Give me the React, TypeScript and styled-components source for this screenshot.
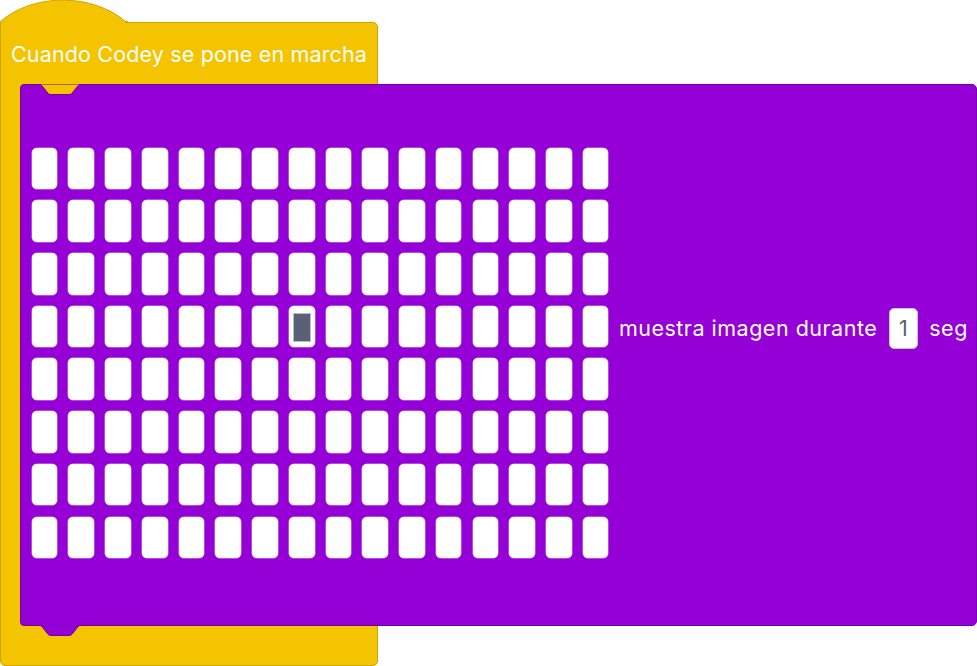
import React from "react";
import styled, { createGlobalStyle } from "styled-components";

const YELLOW = "#f5c400";
const YELLOW_EDGE = "#cfa500";
const PURPLE = "#9400d6";
const PURPLE_EDGE = "#7400a8";
const FONT = `"Inter", "Noto Sans", "Liberation Sans", sans-serif`;

const Global = createGlobalStyle`
  html, body { margin: 0; padding: 0; background: #ffffff; }
  body { font-family: ${FONT}; overflow: hidden; }
`;

const Workspace = styled.div`
  width: 977px;
  height: 666px;
  overflow: hidden;
  background: #ffffff;
`;

const Script = styled.div`
  display: flex;
  flex-direction: column;
  width: 378px;
`;

const Cap = styled.svg`
  display: block;
  position: relative;
  z-index: 2;
  margin-bottom: -2px;
`;

const CBlock = styled.div`
  box-sizing: border-box;
  width: 378px;
  background: ${YELLOW};
  border: 1px solid ${YELLOW_EDGE};
  border-radius: 0 5px 5px 5px;
  display: flex;
  flex-direction: column;
`;

const HatLabel = styled.div`
  height: 61px;
  display: flex;
  align-items: center;
  padding-left: 10px;
  color: #ffffff;
  font-size: 21.5px;
  letter-spacing: 0.15px;
  white-space: nowrap;
`;

const Mouth = styled.div`
  display: flex;
  padding-left: 19px;
`;

const StackBlock = styled.div`
  position: relative;
  box-sizing: border-box;
  flex: none;
  width: 957px;
  height: 542px;
  background: ${PURPLE};
  border: 1px solid ${PURPLE_EDGE};
  border-radius: 4px 5px 5px 4px;
  padding: 62.7px 0 0 10.7px;
  display: flex;
  align-items: flex-start;
`;

const Notch = styled.svg<{ $edge: "top" | "bottom" }>`
  position: absolute;
  left: 17px;
  ${(p) => (p.$edge === "top" ? "top: -1px;" : "bottom: -12px;")}
`;

const Matrix = styled.div`
  display: grid;
  grid-template-columns: repeat(16, 25.7px);
  grid-auto-rows: 41.6px;
  column-gap: 11.05px;
  row-gap: 11.1px;
`;

const Led = styled.div`
  box-sizing: border-box;
  background: #ffffff;
  border-radius: 5px;
  box-shadow: 0 0 0 0.5px rgba(225, 190, 245, 0.8);
  display: flex;
  align-items: center;
  justify-content: center;
  padding-top: 2px;
`;

const Cursor = styled.div`
  box-sizing: border-box;
  width: 18px;
  height: 29px;
  background: #5b6079;
  border: 1px solid #b8bbc9;
`;

const Fields = styled.div`
  display: flex;
  align-items: center;
  gap: 11.5px;
  margin-top: 160.3px;
  margin-left: 10.5px;
  color: #ffffff;
  font-size: 21.5px;
  letter-spacing: 0.5px;
  white-space: nowrap;
`;

const NumberInput = styled.div`
  box-sizing: border-box;
  width: 29px;
  height: 41px;
  background: #ffffff;
  border: 1px solid #c9c3d6;
  border-radius: 5px;
  display: flex;
  align-items: center;
  justify-content: center;
  color: #575e75;
  font-size: 21.5px;
  letter-spacing: 0;
`;

const BottomArm = styled.div`
  height: 39px;
`;

const NOTCH_D =
  "M0,0 c 2,0 3,1 4,2.5 l 4,5 c 1,1.5 2,2.5 4,2.5 h 18 c 2,0 3,-1 4,-2.5 l 4,-5 c 1,-1.5 2,-2.5 4,-2.5";

const ROWS = 8;
const COLS = 16;

export default function App() {
  const cells = [];
  for (let r = 0; r < ROWS; r++) {
    for (let c = 0; c < COLS; c++) {
      const on = r === 3 && c === 7;
      cells.push(<Led key={`${r}-${c}`}>{on && <Cursor />}</Led>);
    }
  }
  return (
    <Workspace>
      <Global />
      <Script>
        <Cap width="128" height="24" viewBox="0 0 128 24">
          <path
            d="M0.5,24 L0.5,21.5 C 33,-7 92.5,-7 125.5,21.5 L125.5,24 Z"
            fill={YELLOW}
          />
          <path
            d="M0.5,24 L0.5,21.5 C 33,-7 92.5,-7 125.5,21.5 L128,21.5"
            fill="none"
            stroke={YELLOW_EDGE}
            strokeWidth="1"
          />
        </Cap>
        <CBlock>
          <HatLabel>Cuando Codey se pone en marcha</HatLabel>
          <Mouth>
            <StackBlock>
              <Notch $edge="top" width="44" height="12" viewBox="-1 0 44 12">
                <path d={`${NOTCH_D} Z`} fill={YELLOW} transform="translate(0,0.5)" />
                <path d={NOTCH_D} fill="none" stroke={PURPLE_EDGE} transform="translate(0,0.5)" />
              </Notch>
              <Matrix>{cells}</Matrix>
              <Fields>
                <span>muestra imagen durante</span>
                <NumberInput>1</NumberInput>
                <span>seg</span>
              </Fields>
              <Notch $edge="bottom" width="44" height="13" viewBox="-1 -1 44 13">
                <path d={`${NOTCH_D} Z`} fill={PURPLE} transform="translate(0,0.5)" />
                <path d={NOTCH_D} fill="none" stroke={PURPLE_EDGE} transform="translate(0,0.5)" />
              </Notch>
            </StackBlock>
          </Mouth>
          <BottomArm />
        </CBlock>
      </Script>
    </Workspace>
  );
}
